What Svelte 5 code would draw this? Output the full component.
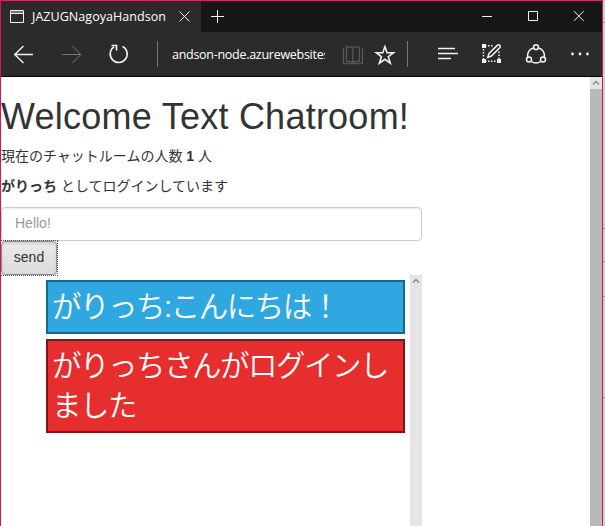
<script>
  let message = $state('');
  const logs = [
    { kind: 'chat', text: 'がりっち:こんにちは！' },
    { kind: 'login', text: 'がりっちさんがログインしました' }
  ];
  const ticks = [22, 228, 261, 296, 397];
</script>

<div class="screen">
  <div class="window">
    <header class="titlebar">
      <div class="tab">
        <svg class="pageicon" width="14" height="13" viewBox="0 0 14 13"><path d="M.5.5h13v12H.5zM.5 3.5h13" /><path d="M1 2h12" opacity=".7" /></svg>
        <span class="tabtitle">JAZUGNagoyaHandson</span>
        <svg class="close" width="11" height="11" viewBox="0 0 11 11"><path d="M.5.5l10 10M10.5.5l-10 10" /></svg>
      </div>
      <svg class="plus" width="13" height="13" viewBox="0 0 13 13"><path d="M6.5 0v13M0 6.5h13" /></svg>
      <svg class="controls" width="104" height="12" viewBox="0 0 104 12">
        <path d="M0 6.5h10M46.5 1.5h9v9h-9zM92 1.2l9.6 9.6M101.6 1.2L92 10.8" />
      </svg>
    </header>

    <nav class="toolbar">
      <svg class="navicons" width="171" height="44" viewBox="1 0 171 44">
        <path d="M33 22.5H14.5M23.5 14l-8.800 8.500 8.800 8.500" stroke-width="1.4" />
        <path d="M62 22.5H80.500M72.500 14l8.300 8.500-8.300 8.500" stroke="#777" />
        <path d="M122.500 14.400A8.500 8.500 0 1 1 114 14.900M111.500 13.500h5v5" stroke-width="1.6" />
        <path d="M157.500 9v26" stroke="#777" />
      </svg>
      <div class="address"><span>andson-node.azurewebsites</span></div>
      <svg class="tools" width="277" height="44" viewBox="325 32 277 44">
        <g stroke="#565656" stroke-width="1.3">
          <path d="M343.500 48v15.500h19V48M352.900 62.500V49q0-2-2.700-2h-3.700v14.300h4q2.400 0 2.400 2v-14.500q0-2 2.500-2h4v14.500h-4q-2.500 0-2.500 2" />
        </g>
        <path d="M384.900 46.600l2.100 6.100h6.500l-5.200 4 2 6.500-5.400-3.900-5.500 3.900 2-6.500-5.100-4h6.500z" stroke-width="1.6" />
        <path d="M407.500 41v26" stroke="#777" />
        <path d="M438 48.500h17M438 53.500h20M438 58.500h13" stroke-width="1.3" />
        <g stroke-width="1.5">
          <path d="M483.500 46v15M499 59v-8M485 45.800h9M485 61.300h14" stroke-dasharray="1.5 1.500" />
          <path d="M487.700 57.500l1.300-4 8.500-8.400q1.200-.9 2.300.1t.1 2.300l-8.500 8.500z" />
          <path d="M482 44h4v4h-4zM482 59h4v4h-4zM497 59h4v4h-4z" fill="#f3f3f3" stroke="none" />
        </g>
        <g stroke-width="1.5">
          <path d="M533.500 48a7.800 7.800 0 0 0-5.800 9.200M538.500 48a7.800 7.800 0 0 1 5.800 9.200M531.500 61.700q4.500 2.700 9 0" />
          <circle cx="536" cy="47.200" r="2.400" /><circle cx="529" cy="59.500" r="2.500" /><circle cx="543" cy="59.500" r="2.500" />
        </g>
        <g fill="#f3f3f3" stroke="none"><circle cx="572.500" cy="54" r="1.400" /><circle cx="580" cy="54" r="1.400" /><circle cx="587.500" cy="54" r="1.400" /></g>
      </svg>
    </nav>

    <div class="viewport">
      <main>
        <h1>Welcome Text Chatroom!</h1>
        <p>現在のチャットルームの人数 <b>1</b> 人</p>
        <p><b>がりっち</b> としてログインしています</p>
        <input placeholder="Hello!" bind:value={message} />
        <button>send</button>
        <div class="history">
          <ul>
            {#each logs as log}
              <li class={log.kind}>{log.text}</li>
            {/each}
          </ul>
          <div class="track"><svg width="8" height="6" viewBox="0 0 8 6"><path d="M1 4.500l3-3 3 3" /></svg></div>
        </div>
      </main>
      <div class="pagescroll">
        <div class="up"><svg width="8" height="6" viewBox="0 0 8 6"><path d="M1 4.500l3-3 3 3" /></svg></div>
      </div>
    </div>
  </div>
  <div class="edge">
    {#each ticks as y}<i style="top:{y}px"></i>{/each}
  </div>
</div>

<style>
  * { box-sizing: border-box; }
  :global(body) { margin: 0; overflow: hidden; }
  svg { display: block; fill: none; stroke: #f3f3f3; flex: none; }
  .screen { display: flex; width: 605px; height: 526px; overflow: hidden; background: #fff; }
  .window { width: 603px; height: 526px; border: 1px solid #c9185e; border-top-color: #c92c69; border-bottom: 0; display: flex; flex-direction: column; }
  .titlebar { height: 31px; flex: none; background: #171717; display: flex; }
  .tab { width: 200px; background: #2b2b2b; display: flex; align-items: center; padding-left: 9px; }
  .pageicon { margin-right: 8px; }
  .tabtitle { width: 136px; font: 12.500px/16px "Open Sans", sans-serif; letter-spacing: .05px; color: #fff; white-space: nowrap; }
  .close { margin-left: 11px; }
  .plus { margin: 9px 0 0 10px; }
  .controls { margin: 9px 16px 0 auto; }
  .toolbar { height: 45px; flex: none; background: #2b2b2b; border-bottom: 1px solid #000; display: flex; }
  .address { width: 153px; overflow: hidden; font: 12.500px/45px "Open Sans", sans-serif; letter-spacing: -.28px; color: #fff; white-space: nowrap; }
  .viewport { flex: 1; min-height: 0; display: flex; background: #fff; }
  main { flex: 1; color: #333; font: 14px/20px "Liberation Sans", "Noto Sans CJK JP", sans-serif; display: flex; flex-direction: column; min-height: 0; }
  h1 { margin: 20px 0 10px; font-size: 36px; line-height: 39px; font-weight: 500; letter-spacing: .24px; white-space: nowrap; }
  p { margin: 0 0 10px; height: 20px; white-space: nowrap; }
  input { width: 421px; height: 34px; flex: none; margin: 1px 0 0; padding: 5px 13px 7px; border: 1px solid #ccc; border-radius: 4px; box-shadow: inset 0 1px 1px rgba(0,0,0,.075); font: inherit; outline: none; }
  input::placeholder { color: #999; opacity: 1; }
  button { width: 56px; height: 34px; flex: none; padding: 0 0 2px; color: #333; font: inherit; border: 1px solid #8c8c8c; border-radius: 4px; background: linear-gradient(#eaeaea, #dcdcdc); box-shadow: inset 0 2px 3px rgba(0,0,0,.1); position: relative; }
  button::after { content: ""; position: absolute; inset: -2px -2px -2px -1px; border: 1px dotted #555; border-left: 0; }
  .history { width: 421px; flex: 1; min-height: 0; display: flex; overflow: hidden; }
  ul { list-style: none; width: 409px; margin: 0; padding: 5px 5px 0 45px; }
  li { height: 54px; margin-bottom: 5px; padding: 5px 5px 5px 4px; border: 2px solid; color: #fff; font-size: 29.500px; letter-spacing: -1.500px; line-height: 40px; font-weight: 350; }
  .chat { background: #2fa8e1; border-color: #176690; }
  .login { height: 94px; background: #e62e2e; border-color: #851316; }
  .track { width: 12px; flex: none; background: #e5e5e5; padding: 3px 0 0 2px; }
  .track svg, .up svg { stroke: #888; stroke-width: 1.400; }
  .pagescroll { width: 12px; background: #b9b9b9; }
  .up { height: 12px; background: #e5e5e5; padding: 3px 0 0 2px; }
  .edge { width: 2px; background: #d0d0d0; position: relative; }
  .edge i { position: absolute; left: 0; width: 2px; height: 1px; background: #a5a5a5; }
</style>
